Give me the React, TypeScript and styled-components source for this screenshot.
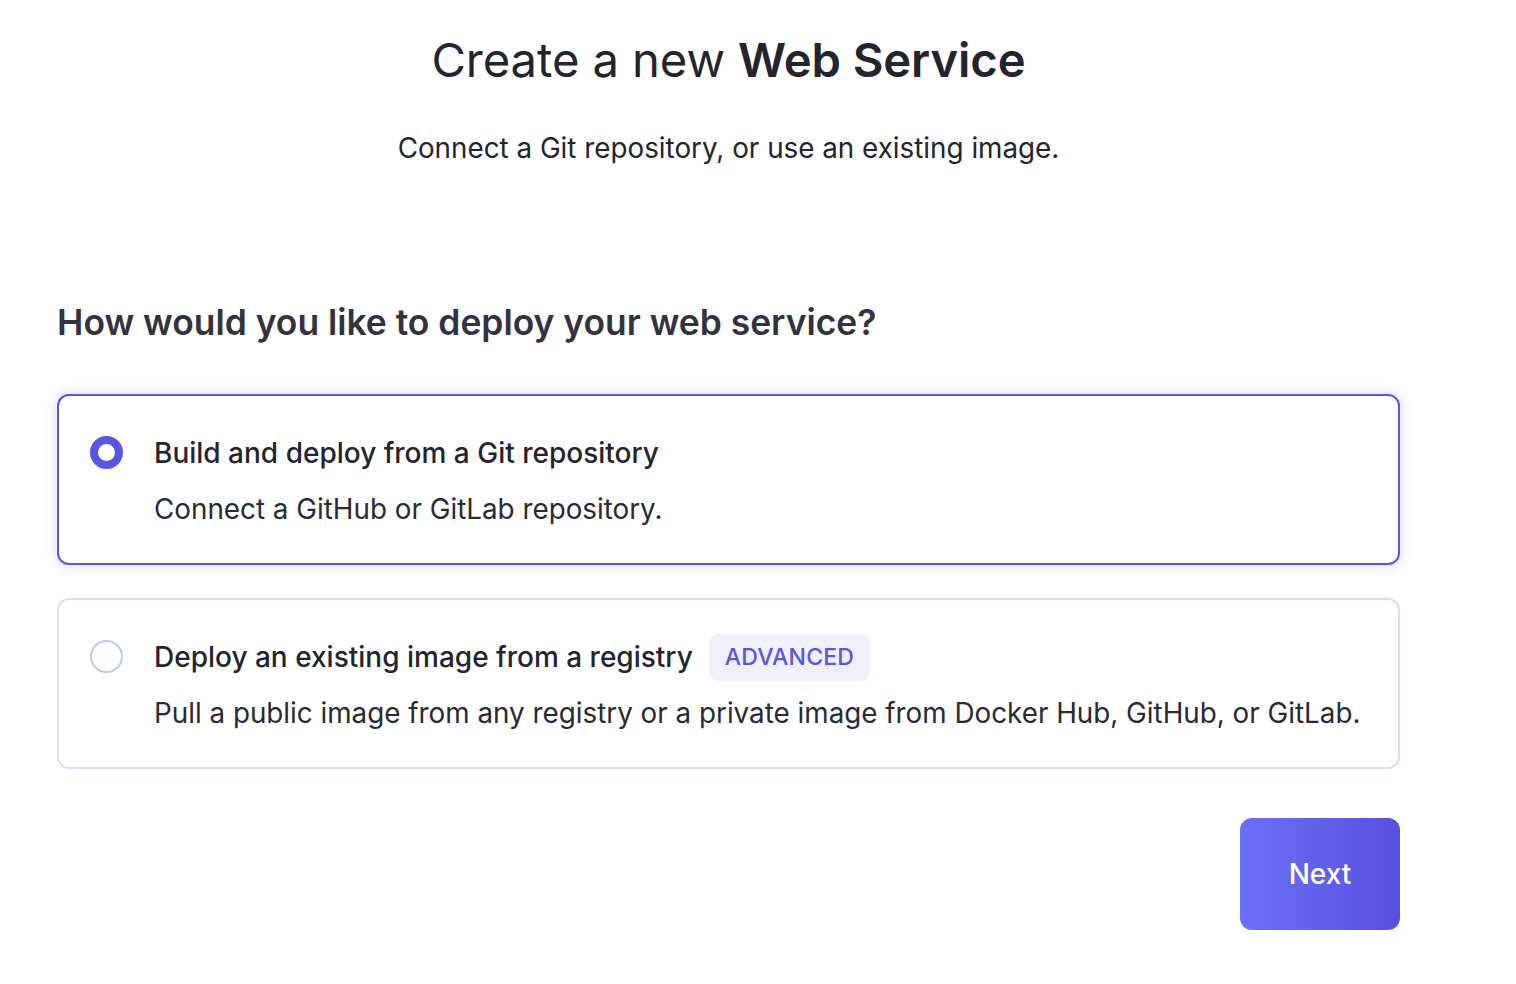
import React, { useState } from "react";
import styled, { createGlobalStyle, css } from "styled-components";

const GlobalStyle = createGlobalStyle`
  html, body {
    margin: 0;
    padding: 0;
    background: #ffffff;
  }
  body {
    font-family: Inter, "Noto Sans", "Liberation Sans", sans-serif;
    color: #24242f;
    -webkit-font-smoothing: antialiased;
  }
`;

const Page = styled.div`
  width: 1343px;
  padding: 28px 0 0 57px;
  display: flex;
  flex-direction: column;
`;

const Header = styled.header`
  display: flex;
  flex-direction: column;
  align-items: center;
  gap: 38px;
`;

const Title = styled.h1`
  margin: 0;
  font-size: 47.2px;
  line-height: 64px;
  font-weight: 400;
  letter-spacing: -0.1px;
  color: #24242f;

  strong {
    font-weight: 600;
  }
`;

const Subtitle = styled.p`
  margin: 0;
  font-size: 27.8px;
  line-height: 36px;
  font-weight: 400;
  color: #24242f;
`;

const Question = styled.h2`
  margin: 134px 0 0;
  font-size: 35.4px;
  line-height: 46px;
  font-weight: 600;
  color: #33333f;
`;

const Options = styled.div`
  margin-top: 48px;
  display: flex;
  flex-direction: column;
  gap: 33px;
`;

const Card = styled.label<{ $selected: boolean }>`
  box-sizing: border-box;
  height: 171px;
  display: flex;
  align-items: flex-start;
  gap: 31px;
  padding: 38px 32px 0 31px;
  border-radius: 12px;
  background: #ffffff;
  cursor: pointer;
  ${(p) =>
    p.$selected
      ? css`
          border: 2px solid #5a55e2;
          box-shadow: 0 0 10px 3px rgba(90, 85, 226, 0.16);
        `
      : css`
          border: 2px solid #d8dff0;
        `}
`;

const Radio = styled.span<{ $checked: boolean }>`
  flex: none;
  box-sizing: border-box;
  width: 33px;
  height: 33px;
  margin-top: 2px;
  border-radius: 50%;
  background: #ffffff;
  ${(p) =>
    p.$checked
      ? css`
          border: 8px solid #5a55e2;
        `
      : css`
          border: 2.5px solid #bfc8e4;
        `}
`;

const Body = styled.div`
  display: flex;
  flex-direction: column;
  gap: 18px;
`;

const OptionTitleRow = styled.div`
  display: flex;
  align-items: center;
  gap: 16px;
  height: 38px;
`;

const OptionTitle = styled.span`
  font-size: 28px;
  line-height: 38px;
  font-weight: 500;
  color: #24242f;
`;

const Badge = styled.span`
  display: inline-flex;
  align-items: center;
  height: 47px;
  padding: 0 16px;
  border-radius: 9px;
  background: #f0f0fd;
  color: #5a55e2;
  font-size: 23px;
  font-weight: 500;
  letter-spacing: 0.2px;
`;

const OptionText = styled.span`
  font-size: 27.8px;
  line-height: 38px;
  font-weight: 400;
  color: #2a2a35;
`;

const Actions = styled.div`
  margin-top: 49px;
  display: flex;
  justify-content: flex-end;
`;

const NextButton = styled.button`
  width: 160px;
  height: 112px;
  border: none;
  border-radius: 12px;
  background: linear-gradient(90deg, #6a70f7 0%, #5a4fe0 100%);
  color: #ffffff;
  font-family: inherit;
  font-size: 28px;
  font-weight: 500;
  cursor: pointer;
`;

type Option = {
  id: string;
  title: string;
  text: string;
  badge?: string;
};

const options: Option[] = [
  {
    id: "git",
    title: "Build and deploy from a Git repository",
    text: "Connect a GitHub or GitLab repository.",
  },
  {
    id: "image",
    title: "Deploy an existing image from a registry",
    text: "Pull a public image from any registry or a private image from Docker Hub, GitHub, or GitLab.",
    badge: "ADVANCED",
  },
];

export default function App() {
  const [selected, setSelected] = useState("git");

  return (
    <>
      <GlobalStyle />
      <Page>
        <Header>
          <Title>
            Create a new <strong>Web Service</strong>
          </Title>
          <Subtitle>Connect a Git repository, or use an existing image.</Subtitle>
        </Header>

        <Question>How would you like to deploy your web service?</Question>

        <Options>
          {options.map((o) => (
            <Card
              key={o.id}
              $selected={selected === o.id}
              onClick={() => setSelected(o.id)}
            >
              <Radio $checked={selected === o.id} />
              <Body>
                <OptionTitleRow>
                  <OptionTitle>{o.title}</OptionTitle>
                  {o.badge && <Badge>{o.badge}</Badge>}
                </OptionTitleRow>
                <OptionText>{o.text}</OptionText>
              </Body>
            </Card>
          ))}
        </Options>

        <Actions>
          <NextButton>Next</NextButton>
        </Actions>
      </Page>
    </>
  );
}
